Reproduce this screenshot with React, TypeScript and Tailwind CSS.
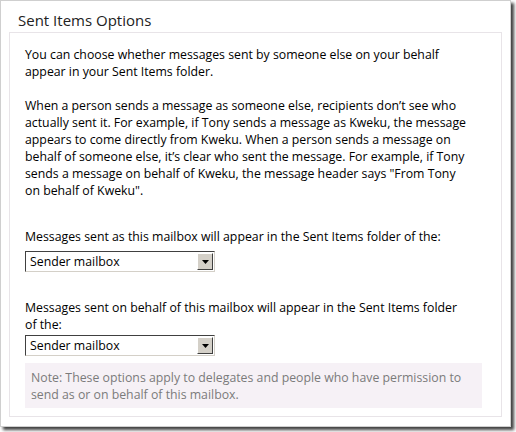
import React from "react";

function SelectBox() {
  return (
    <div className="flex h-[21px] w-[190px] items-stretch border-t border-l border-t-[#404040] border-l-[#404040] border-b border-r border-b-[#d4d0c8] border-r-[#d4d0c8] bg-white">
      <div className="flex-1 pl-[4px] text-[12.3px] leading-[19px] text-black">Sender mailbox</div>
      <div className="m-[1px] flex w-[16px] items-center justify-center border-t border-l border-t-white border-l-white border-b border-r border-b-[#404040] border-r-[#404040] bg-[#d4d0c8]">
        <svg width="7" height="4" viewBox="0 0 7 4">
          <path d="M0 0h7L3.5 4z" fill="#000" />
        </svg>
      </div>
    </div>
  );
}

export default function App() {
  return (
    <div className="h-[432px] w-[516px] bg-white" style={{ fontFamily: "'Open Sans', 'Noto Sans', sans-serif" }}>
      <div className="flex h-[427px] w-[511px] flex-col border border-[#cfcfcf] bg-white shadow-[3px_3px_3px_rgba(0,0,0,0.75)]">
        <h1 className="pl-[17px] pt-[8px] text-[15px] leading-[22px] text-[#222]">Sent Items Options</h1>
        <div className="mx-[8px] mb-[9px] mt-[1px] flex-1 whitespace-nowrap border border-[#e8e4e8] px-[15px] pt-[13px] text-[12.3px] leading-[17px] text-black">
          <p>
            You can choose whether messages sent by someone else on your behalf
            <br />
            appear in your Sent Items folder.
          </p>
          <p className="mt-[17px]">
            When a person sends a message as someone else, recipients don’t see who
            <br />
            actually sent it. For example, if Tony sends a message as Kweku, the message
            <br />
            appears to come directly from Kweku. When a person sends a message on
            <br />
            behalf of someone else, it’s clear who sent the message. For example, if Tony
            <br />
            sends a message on behalf of Kweku, the message header says "From Tony
            <br />
            on behalf of Kweku".
          </p>
          <p className="mt-[29px]">Messages sent as this mailbox will appear in the Sent Items folder of the:</p>
          <div className="mt-[6px]">
            <SelectBox />
          </div>
          <p className="mt-[27px]">
            Messages sent on behalf of this mailbox will appear in the Sent Items folder
            <br />
            of the:
          </p>
          <div className="mt-[2px]">
            <SelectBox />
          </div>
          <div className="mt-[7px] w-[457px] bg-[#f6f1f6] px-[6px] pb-[5px] pt-[6px] text-[#7b7b7b]">
            Note: These options apply to delegates and people who have permission to
            <br />
            send as or on behalf of this mailbox.
          </div>
        </div>
      </div>
    </div>
  );
}
